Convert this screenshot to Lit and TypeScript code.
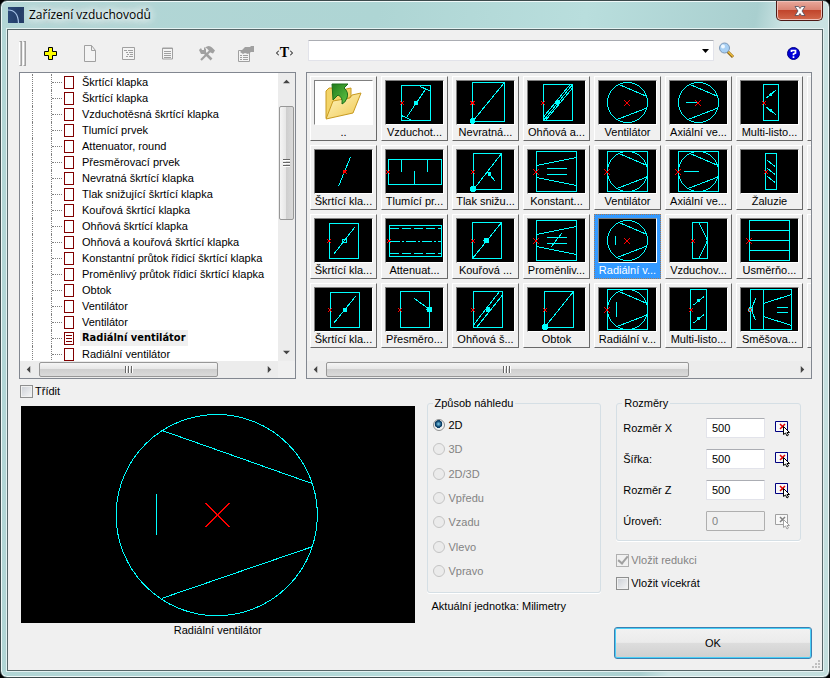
import { LitElement, html, svg, css } from "lit";
import { customElement, state } from "lit/decorators.js";
import { classMap } from "lit/directives/class-map.js";

const TREE = [
  "Škrtící klapka",
  "Škrtící klapka",
  "Vzduchotěsná škrtící klapka",
  "Tlumící prvek",
  "Attenuator, round",
  "Přesměrovací prvek",
  "Nevratná škrtící klapka",
  "Tlak snižující škrtící klapka",
  "Kouřová škrtící klapka",
  "Ohňová škrtící klapka",
  "Ohňová a kouřová škrtící klapka",
  "Konstantní průtok řídicí škrtící klapka",
  "Proměnlivý průtok řídicí škrtící klapka",
  "Obtok",
  "Ventilátor",
  "Ventilátor",
  "Radiální ventilátor",
  "Radiální ventilátor",
];

const line = (d: string) => svg`<path class="c" d=${d}></path>`;
const mark = (x: number, y: number, r = 2) =>
  svg`<path class="r" d=${`M${x - r} ${y - r}L${x + r} ${y + r}M${x + r} ${y - r}L${x - r} ${y + r}`}></path>`;
const dot = (x: number, y: number, r = 2.5) => svg`<circle class="d" cx=${x} cy=${y} r=${r}></circle>`;
const fan = svg`<circle class="c" cx="29.5" cy="22.5" r="20"></circle>
  <path class="c" d="M21 4.5L49 16.5M19 39.5L49 28"></path>`;
const square = line("M9.5 2.5H49.5V42.5H9.5Z");
const cone = line("M9.5 2.5H49.5V42.5H9.5ZM9.5 16.5L49.5 8.5M9.5 28.5L49.5 36.5M19.5 19.5H40M19.5 25.5H40");

const TILES: { label: string; art: unknown }[] = [
  { label: "..", art: null },
  { label: "Vzduchot...", art: [line("M16.5 5.5H45.5V40.5H16.5ZM21.5 37.5L41 8.5M35 6.5L45.5 11M16.5 35.5L26 40"), dot(31, 23), mark(17, 23)] },
  { label: "Nevratná...", art: [line("M16.5 2.5H48.5V41.5H16.5ZM48.5 2.5L16.5 41.5"), dot(16.5, 41, 3), mark(16.5, 23)] },
  { label: "Ohňová a...", art: [line("M16.5 4.5H45.5V40.5H16.5ZM43 4.5L16.5 37M45.5 4.5L16.5 40.5M45.5 8L18.5 40.5"), dot(30.5, 22.5), mark(16, 23)] },
  { label: "Ventilátor", art: [fan, mark(29, 23, 3)] },
  { label: "Axiální ve...", art: [fan, line("M17 22.5H29"), mark(29, 23, 3)] },
  { label: "Multi-listo...", art: [line("M23.5 4.5H38.5V40.5H23.5ZM26.5 18L36 10M26 27L36 34.5"), dot(31, 14.5, 1.5), dot(31, 30.5, 1.5), mark(24, 23)] },

  { label: "Škrtící kla...", art: [line("M36.5 8L24.5 37.5"), mark(31, 23), svg`<circle class="k" cx="30.5" cy="22.5" r="1.5"></circle>`] },
  { label: "Tlumící pr...", art: [line("M3.5 10.5H56.5V35.5H3.5ZM16.5 10.5V22.5M42.5 10.5V22.5M29.5 22V35.5"), mark(3, 23)] },
  { label: "Tlak snižu...", art: [line("M17.5 4.5H45.5V40.5H17.5ZM45.5 4.5L17.5 40.5M39.5 32.5L31.5 23"), dot(33.5, 25, 2), dot(17, 40, 3), mark(17, 23)] },
  { label: "Konstant...", art: [cone, mark(9, 23, 3)] },
  { label: "Ventilátor", art: [square, fan, mark(9, 23, 3)] },
  { label: "Axiální ve...", art: [square, fan, line("M15 22.5H30"), mark(9, 23, 3)] },
  { label: "Žaluzie", art: [line("M25.5 4.5H36.5V40.5H25.5ZM27.5 11.5L35 17.5M27.5 19.5L35 25.5M27.5 27.5L35 33.5"), mark(26, 23)] },

  { label: "Škrtící kla...", art: [line("M15.5 5.5H44.5V40.5H15.5ZM40.5 9.5L19.5 36.5M28.5 21.5H32.5V24.5H28.5Z"), mark(15, 23)] },
  { label: "Attenuat...", art: [line("M4.5 7.5H56.5V38.5H4.5Z"), svg`<path class="c" stroke-dasharray="9 3" d="M5 10.5H56M5 35.5H56"></path><path class="c" stroke-dasharray="10 2 2 2" d="M5 23.5H56"></path>`, mark(4, 23)] },
  { label: "Kouřová ...", art: [line("M16.5 4.5H45.5V40.5H16.5ZM45.5 4.5L16.5 40.5"), dot(30.5, 22.5, 3), mark(17, 23)] },
  { label: "Proměnliv...", art: [cone, line("M34.5 15.5L24 29"), mark(9, 23, 3)] },
  { label: "Radiální v...", art: [fan, line("M17.5 18V27"), mark(29, 23, 3)] },
  { label: "Vzduchov...", art: [line("M23.5 4.5H38.5V40.5H23.5ZM30 4.5L38.5 22.5L30 40.5"), mark(24, 23)] },
  { label: "Usměrňo...", art: [square, line("M9.5 12.5H49.5M9.5 22.5H49.5M9.5 32.5H49.5"), mark(9, 23, 3)] },

  { label: "Škrtící kla...", art: [line("M16.5 5.5H45.5V40.5H16.5ZM41.5 9.5L19.5 36.5"), dot(31, 23), mark(16, 23)] },
  { label: "Přesměro...", art: [line("M15.5 4.5H44.5V40.5H15.5ZM29.5 11.5L44.5 22.5"), dot(44.5, 22.5, 3), mark(15, 23)] },
  { label: "Ohňová š...", art: [line("M17.5 4.5H46.5V40.5H17.5ZM43.5 4.5L17.5 38M46.5 8L20.5 40.5"), dot(32, 22.5), mark(17, 23)] },
  { label: "Obtok", art: [line("M17.5 4.5H46.5V40.5H17.5ZM46.5 4.5L17.5 40.5"), dot(18, 40, 3), mark(18, 23)] },
  { label: "Radiální v...", art: [square, fan, line("M18.5 15V30"), mark(9, 23, 3)] },
  { label: "Multi-listo...", art: [line("M21.5 2.5H37.5V42.5H21.5ZM24.5 18L35 9.5M24.5 36L35 27.5"), dot(29.5, 13.5, 1.5), dot(29.5, 31.5, 1.5), mark(22, 23)] },
  { label: "Směšova...", art: [line("M10.5 2.5H51.5V42.5H10.5ZM23.5 2.5V42.5M23.5 16.5L51.5 7.5M23.5 29.5L51.5 38.5M36.5 20.5H48M36.5 25.5H48M15.5 11.5L11.5 22.5L15.5 33.5"), dot(10.5, 22.5), mark(10, 23)] },
];

const VIEWS = ["2D", "3D", "2D/3D", "Vpředu", "Vzadu", "Vlevo", "Vpravo"];

const SIZES = [
  { id: "x", label: "Rozměr X", value: "500", off: false },
  { id: "w", label: "Šířka:", value: "500", off: false },
  { id: "z", label: "Rozměr Z", value: "500", off: false },
  { id: "l", label: "Úroveň:", value: "0", off: true },
];

const folder = html`<svg class="art folder" viewBox="1 1 57 43">
  <defs>
    <linearGradient id="fo" x1="0" y1="0" x2="1" y2="1"><stop offset="0" stop-color="#fff6c4"></stop><stop offset="1" stop-color="#f0c850"></stop></linearGradient>
    <linearGradient id="gr" x1="0" y1="0" x2="1" y2="1"><stop offset="0" stop-color="#1f7a1c"></stop><stop offset="1" stop-color="#62c846"></stop></linearGradient>
  </defs>
  <path d="M12 38V11l3-3h6l2 3 14-3v8z" fill="#f3d468" stroke="#c89a20"></path>
  <path d="M12 39l7-18 17-3 2-3 9-2-8 20z" fill="url(#fo)" stroke="#c89a20"></path>
  <path d="M18 4h16l-4 4q5 4 3 10-2 5-5 6 1-7-4-9l-5 5z" fill="url(#gr)" stroke="#1c6c1a"></path>
</svg>`;

const TOOLS = [
  { name: "Přidat", art: svg`<path d="M7.500 3.500h4v4h4v4h-4v4h-4v-4h-4v-4h4z" fill="#ffff00" stroke="#000"></path>` },
  { name: "Nový", art: svg`<path d="M4.500 1.500h7l4 5v11h-11zM11.500 1.500v5h4" fill="#f4f4f4" stroke="#a0a0a0"></path>` },
  { name: "Seznam", art: svg`<path d="M3.500 3.500h12v12h-12z" fill="#f4f4f4" stroke="#a0a0a0"></path><path d="M5 6.500h3M9 6.500h5M7 8.500h2M10 8.500h4M8 10.500h2M11 10.500h3M7 12.500h2M10 12.500h4" stroke="#a0a0a0"></path>` },
  { name: "Text", art: svg`<path d="M4.500 4h10v11h-10z" fill="#f4f4f4" stroke="#a0a0a0"></path><path d="M4 4.500h11M6 7.500h7M6 9.500h7M6 11.500h7M6 13.500h7" stroke="#a0a0a0"></path>` },
  { name: "Nástroje", art: svg`<path d="M4 16L13 7" stroke="#a0a0a0" stroke-width="2.200"></path><path d="M7 8L14.500 15.500" stroke="#a0a0a0" stroke-width="2.600"></path><path d="M8 3.500q4-3 7 0l3 3-2 3-2.500-1-3.500-4z" fill="#a0a0a0"></path><path d="M2 6l2-2 1 2h2L7 3l2 2v3L7 10H4z" fill="#a0a0a0"></path>` },
  { name: "Vlastnosti", art: svg`<path d="M2.500 6.500h11v11h-11z" fill="#f4f4f4" stroke="#a0a0a0"></path><path d="M4 11.500h2M7 11.500h5M4 13.500h2M7 13.500h5M4 15.500h2M7 15.500h5" stroke="#a0a0a0"></path><path d="M4 8l5-5h5l1-1h3v6h-3l-3 2-3-1-2 1z" fill="#a0a0a0"></path>` },
];

const picker = (off: boolean) => {
  const a = off ? "#a0a0a0" : "#000080";
  const b = off ? "#808080" : "#e00000";
  const c = off ? "#a0a0a0" : "#000";
  return html`<svg width="16" height="17" viewBox="0 0 16 17">
    <path d="M.5 1.500h12v10H.5z" fill="#f8f8f8" stroke=${a}></path>
    <path d="M5 4l5 5M10 4l-5 5" stroke=${b} stroke-width="1.500"></path>
    <path d="M8.500 6.500v8l2-1.500 1.500 3 1.500-1-1.500-2.500h2.500z" fill="#fff" stroke=${c}></path>
  </svg>`;
};

const arrow = (dir: string) => {
  const d = { left: "M6 0v8L2 4z", right: "M2 0v8l4-4z", up: "M0 6h8L4 2z", down: "M0 2h8L4 6z" }[dir];
  return html`<svg width="7" height="7" viewBox="0 0 8 8"><path d=${d} fill="#444"></path></svg>`;
};

const bar = (kind: string) => html`<div class="bar ${kind}" aria-hidden="true">
  <span class="arrow">${arrow(kind === "v" ? "up" : "left")}</span>
  <span class="lead"></span>
  <span class="thumb"><span class="ridges"></span></span>
  <span class="rest"></span>
  <span class="arrow">${arrow(kind === "v" ? "down" : "right")}</span>
</div>`;

@customElement("app-root")
export class AppRoot extends LitElement {
  @state() private node = 16;
  @state() private tile = 18;

  static styles = css`
    :host {
      display: block;
      background: #000;
      color: #000;
      font: 11px/14px "Liberation Sans", "Noto Sans", sans-serif;
    }
    * { box-sizing: border-box; }
    button, input, select { font: inherit; color: inherit; margin: 0; }
    svg { display: block; }
    .window {
      min-height: 100vh;
      display: flex;
      flex-direction: column;
      border: 1px solid #3c4a4c;
      border-radius: 7px;
      padding: 0 6px 6px;
      background: linear-gradient(100deg, #b3d6d6 0, #aed5d4 40%, #b9dedd 62%, #a9cfcf 80%, #cbe3e3 83%, #c2dedd 100%);
      box-shadow: inset 0 0 0 1px #eef8f8;
    }
    .title {
      height: 28px;
      display: flex;
      align-items: center;
      gap: 5px;
      padding-left: 1px;
    }
    .title h1 {
      margin: 0;
      flex: 1;
      font: 12px/18px "Open Sans", "Noto Sans", sans-serif;
      text-shadow: 0 0 6px #fff, 0 0 10px #fff, 0 0 14px #fff, 0 0 18px #fff;
    }
    .close {
      align-self: flex-start;
      width: 47px;
      height: 20px;
      padding: 0;
      display: grid;
      place-items: center;
      border: 1px solid #4d1a16;
      border-top: 0;
      border-radius: 0 0 5px 5px;
      background: linear-gradient(#e9a99c 0, #d98372 48%, #c1452c 50%, #d2694c 100%);
      box-shadow: inset 0 0 0 1px #f0c0b8;
    }
    .body {
      flex: 1;
      border: 1px solid #566668;
      background: #f0f0f0;
      box-shadow: 0 0 0 1px #e4f2f2;
      padding: 0 10px 4px 11px;
      display: flex;
      flex-direction: column;
      position: relative;
    }
    .toolbar { display: flex; align-items: center; height: 42px; padding: 4px 0 0; }
    .grip { width: 12px; height: 25px; display: flex; gap: 1px; flex: none; }
    .grip i { width: 3px; border: 1px solid #a0a0a0; border-left-color: #fff; background: #c8c8c8; }
    .tool { width: 39px; height: 24px; border: 0; padding: 0; background: none; display: grid; place-items: center; flex: none; }
    .tag { display: flex; align-items: center; justify-content: center; gap: 1px; font: bold 14px/16px "Liberation Serif", serif; }
    .combo { flex: 1; position: relative; align-self: flex-start; margin: 6px 0 0 4px; }
    .combo select {
      width: 100%; height: 21px; display: block; appearance: none; border: 1px solid #e2e3ea;
      border-top-color: #abadb3; background: #fff; border-radius: 1px; padding: 0 20px 0 4px;
    }
    .combo svg { position: absolute; right: 5px; top: 9px; pointer-events: none; }
    .find { border: 0; padding: 0; background: none; margin: 0 0 6px 4px; }
    .help { border: 0; padding: 0; background: none; margin: 0 12px 0 52px; }

    .panes { display: grid; grid-template-columns: 277fr 506fr; gap: 10px; height: 307px; }
    .pane { border: 1px solid #828790; min-width: 0; overflow: hidden; display: flex; flex-direction: column; }
    .tree { background: #fff; }
    .rows { flex: 1; min-height: 0; display: flex; }
    .tree ul {
      flex: 1; min-width: 0; margin: 0; padding: 1px 0 0 12px; list-style: none; overflow: hidden;
    }
    .tree li {
      height: 16px; display: flex; align-items: center; border-left: 1px dotted #808080;
    }
    .tree li::before { content: ""; width: 18px; height: 16px; border-right: 1px dotted #808080; flex: none; }
    .stem { width: 10px; border-top: 1px dotted #808080; margin: 0 2px 0 0; }
    .page { width: 10px; height: 13px; border: 1px solid #800000; background: #fff; display: grid; align-content: space-evenly; padding: 0 1px; }
    .page i { height: 1px; background: #800000; }
    .node { border: 0; background: none; padding: 0 2px; margin-left: 6px; height: 16px; white-space: nowrap; line-height: 16px; }
    .node.on { font-family: "DejaVu Sans Condensed", sans-serif; font-weight: bold; background: #f0f0f0; }

    .bar { display: flex; align-items: center; background: #ececec; flex: none; }
    .bar.v { width: 17px; flex-direction: column; }
    .bar.h, .bar.w { height: 17px; }
    .arrow { width: 17px; height: 17px; display: grid; place-items: center; flex: none; }
    .thumb {
      display: grid; place-items: center; border: 1px solid #979797; border-radius: 2px;
      background: linear-gradient(#f5f5f5 0, #e6e6e6 48%, #cfcfcf 50%, #dadada 100%);
    }
    .h .thumb { width: 179px; height: 15px; }
    .w .thumb { flex: 363; height: 15px; }
    .w .rest { flex: 106; }
    .h .rest, .v .rest { flex: 1; }
    .v .thumb { width: 15px; height: 114px; background: linear-gradient(90deg, #f5f5f5 0, #e6e6e6 48%, #cfcfcf 50%, #dadada 100%); }
    .h .lead, .w .lead { width: 2px; }
    .v .lead { height: 16px; }
    .ridges { width: 8px; height: 7px; background: repeating-linear-gradient(90deg, #666 0 1px, #fff 1px 2px, transparent 2px 3px); }
    .v .ridges { width: 7px; height: 8px; background: repeating-linear-gradient(#666 0 1px, #fff 1px 2px, transparent 2px 3px); }
    .foot { display: flex; padding-right: 17px; background: #f0f0f0; }
    .foot .bar { flex: 1; }

    .gallery {
      flex: 1; min-height: 0; overflow: hidden; display: grid; padding: 3px;
      grid-template-columns: repeat(8, 67px); grid-auto-rows: 65px; gap: 4px;
    }
    .tile {
      border: 1px solid #fff; border-right-color: #696969; border-bottom-color: #696969;
      background: #f0f0f0; padding: 3px 3px 0; display: flex; flex-direction: column; align-items: center;
      overflow: hidden; white-space: nowrap; line-height: 14px;
    }
    .tile.on { background: #3399ff; color: #fff; border: 1px dotted #a87850; }
    .frame {
      width: 59px; height: 45px; flex: none; background: #000; display: block;
      border: 1px solid #808080; border-right-color: #fff; border-bottom-color: #fff;
    }
    .frame.light { background: #fff; }
    .art { width: 57px; height: 43px; shape-rendering: crispEdges; }
    .folder { shape-rendering: auto; }
    .c { fill: none; stroke: #00ffff; }
    .r { fill: none; stroke: #ff0000; stroke-width: 1.3; }
    .d { fill: #00ffff; }
    .k { fill: #ff0000; }

    .sort { display: flex; align-items: center; gap: 2px; height: 22px; margin: 1px 0 3px 1px; }
    .lower { display: grid; grid-template-columns: 393fr 385fr; gap: 12px; padding-left: 2px; }
    figure { margin: 1px 0 0; text-align: center; }
    .preview { width: 100%; height: auto; background: #000; shape-rendering: crispEdges; }
    .side { display: grid; grid-template-columns: 175fr 185fr; gap: 15px; align-items: start; margin-top: -9px; padding-right: 11px; }
    fieldset { margin: 0; border: 1px solid #d5dfe5; border-radius: 3px; padding: 0 5px; min-width: 0; box-shadow: 0 1px 0 #fff; }
    legend { padding: 0 2px; line-height: 14px; height: 14px; }
    .views { height: 182px; display: flex; flex-direction: column; justify-content: space-between; padding: 8px 0 14px; }
    .opt { display: flex; align-items: center; gap: 4px; height: 14px; }
    .opt input[type="radio"] {
      appearance: none; width: 12px; height: 12px; border: 1px solid #8e8f8f; border-radius: 50%;
      background: radial-gradient(circle, #d8d8d8 0, #fff 100%); flex: none;
    }
    .opt input[type="radio"]:checked {
      background: radial-gradient(circle at 45% 40%, #7fd0f0 0, #0b3f68 36%, #0b3f68 45%, #eee 50%, #fff 100%);
    }
    .off { color: #838383; }
    .opt.off input[type="radio"] { border-color: #c4c4c4; background: #ebebeb; }
    .check { display: flex; align-items: center; gap: 2px; height: 14px; }
    input[type="checkbox"] {
      appearance: none; width: 13px; height: 13px; border: 1px solid #8e8f8f; flex: none;
      background: linear-gradient(135deg, #cbcfd5, #f6f6f6); background-clip: content-box; padding: 1px; display: grid;
    }
    .check.off input { border-color: #b0b0b0; background: #f0f0f0; }
    .check.off input::after {
      content: ""; width: 4px; height: 8px; border: solid #a0a0a0; border-width: 0 2px 2px 0;
      transform: rotate(40deg); place-self: center; margin-top: -2px;
    }
    .sizes { display: grid; gap: 11px; padding: 8px 4px 9px 1px; }
    .size { display: grid; grid-template-columns: 1fr 59px 18px; align-items: center; column-gap: 8px; }
    .size input {
      width: 100%; height: 20px; border: 1px solid #e2e3ea; border-top-color: #abadb3; background: #fff;
      padding: 0 5px; border-radius: 1px;
    }
    .size input:disabled { background: #f0f0f0; border-color: #afafaf; color: #838383; }
    .pick { border: 0; background: none; padding: 0; justify-self: end; }
    .unit { margin: 6px 0 0 5px; white-space: nowrap; }
    .checks { display: grid; gap: 9px; margin-top: 12px; }
    .actions { display: flex; justify-content: flex-end; margin-top: -10px; }
    .ok {
      width: 198px; height: 32px; border: 1px solid #3c7fb1; border-radius: 3px; padding: 0;
      background: linear-gradient(#f2f2f2 0, #ebebeb 48%, #dddddd 50%, #cfcfcf 100%);
      box-shadow: inset 0 0 0 1px #48d0f8;
    }
    .resize { position: absolute; right: 1px; bottom: 1px; }
  `;

  render() {
    return html`<div class="window">
      <header class="title">
        <svg width="16" height="16" viewBox="0 0 16 16">
          <defs><linearGradient id="ti" x1="0" y1="0" x2="1" y2="0"><stop offset="0" stop-color="#2c4a78"></stop><stop offset="1" stop-color="#1c3560"></stop></linearGradient></defs>
          <rect width="16" height="16" fill="url(#ti)"></rect>
          <path d="M0 3Q10 3 10.500 16" fill="none" stroke="#a8c4e8" stroke-width="1.200"></path>
        </svg>
        <h1>Zařízení vzduchovodů</h1>
        <button class="close" aria-label="Zavřít">
          <svg width="12" height="10" viewBox="0 0 12 10"><path d="M1 .5h3.500L6 2.500 7.500 .5H11L8 5l3 4.500H7.500L6 7.500l-1.500 2H1L4 5z" fill="#fff" stroke="#4c4c5c" stroke-width=".8"></path></svg>
        </button>
      </header>
      <main class="body">
        <div class="toolbar">
          <span class="grip"><i></i><i></i></span>
          ${TOOLS.map(
            (t) => html`<button class="tool" aria-label=${t.name}><svg width="19" height="19" viewBox="0 0 19 19">${t.art}</svg></button>`,
          )}
          <button class="tool tag">
            <svg width="3" height="6" viewBox="0 0 3 6"><path d="M3 .5L.5 3 3 5.500" fill="none" stroke="#000"></path></svg>T<svg width="3" height="6" viewBox="0 0 3 6"><path d="M0 .5L2.500 3 0 5.500" fill="none" stroke="#000"></path></svg>
          </button>
          <div class="combo">
            <select aria-label="Hledat"><option></option></select>
            <svg width="7" height="4" viewBox="0 0 7 4"><path d="M0 0h7L3.500 4z" fill="#000"></path></svg>
          </div>
          <button class="find" aria-label="Najít">
            <svg width="17" height="17" viewBox="0 0 17 17">
              <path d="M9.500 9.500L15 15" stroke="#8a6010" stroke-width="3"></path>
              <path d="M10 9.500L15 14.500" stroke="#f0c040" stroke-width="1.500"></path>
              <circle cx="6.500" cy="6" r="5" fill="#a8d0f4" stroke="#7c98b8"></circle>
              <circle cx="5" cy="4.500" r="2" fill="#eef8ff"></circle>
            </svg>
          </button>
          <button class="help" aria-label="Nápověda">
            <svg width="13" height="13" viewBox="0 0 13 13"><circle cx="6.500" cy="6.500" r="6" fill="#0000d8" stroke="#000080"></circle><path d="M4.500 5V3.500h4V6L6.500 7v1.200M6.500 9.200V11" fill="none" stroke="#fff" stroke-width="1.700"></path></svg>
          </button>
        </div>

        <div class="panes">
          <section class="pane tree">
            <div class="rows">
              <ul>
                ${TREE.map(
                  (name, i) => html`<li>
                    <span class="stem"></span>
                    <span class="page">${i === this.node ? html`<i></i><i></i><i></i>` : null}</span>
                    <button class="node ${classMap({ on: i === this.node })}" @click=${() => (this.node = i)}>${name}</button>
                  </li>`,
                )}
              </ul>
              ${bar("v")}
            </div>
            <div class="foot">${bar("h")}</div>
          </section>
          <section class="pane">
            <div class="gallery">
              ${TILES.map(
                (t, i) => html`<button class="tile ${classMap({ on: i === this.tile })}" @click=${() => (this.tile = i)}>
                    <span class="frame ${classMap({ light: !t.art })}">
                      ${t.art ? html`<svg class="art" viewBox="1 1 57 43">${t.art}</svg>` : folder}
                    </span>
                    <span>${t.label}</span>
                  </button>
                  ${i % 7 === 6 ? html`<span class="tile"></span>` : null}`,
              )}
            </div>
            ${bar("w")}
          </section>
        </div>

        <label class="sort"><input type="checkbox" />Třídit</label>

        <div class="lower">
          <figure>
            <svg class="preview" viewBox="0 0 393 217">
              <circle class="c" cx="195.500" cy="109" r="100.500"></circle>
              <path class="c" d="M141 24.500L291 77.500M141 192L291 140.500M135.500 88V129"></path>
              <path class="r" d="M184 97L208 121M208 97L184 121"></path>
            </svg>
            <figcaption>Radiální ventilátor</figcaption>
          </figure>
          <div class="side">
            <div>
              <fieldset>
                <legend>Způsob náhledu</legend>
                <div class="views">
                  ${VIEWS.map(
                    (v, i) => html`<label class="opt ${classMap({ off: i > 0 })}">
                      <input type="radio" name="view" ?checked=${i === 0} ?disabled=${i > 0} />${v}
                    </label>`,
                  )}
                </div>
              </fieldset>
              <p class="unit">Aktuální jednotka: Milimetry</p>
            </div>
            <div>
              <fieldset>
                <legend>Rozměry</legend>
                <div class="sizes">
                  ${SIZES.map(
                    (s) => html`<div class="size">
                      <label for=${s.id}>${s.label}</label>
                      <input id=${s.id} type="text" .value=${s.value} ?disabled=${s.off} />
                      <button class="pick" aria-label="Vybrat" ?disabled=${s.off}>${picker(s.off)}</button>
                    </div>`,
                  )}
                </div>
              </fieldset>
              <div class="checks">
                <label class="check off"><input type="checkbox" checked disabled />Vložit redukci</label>
                <label class="check"><input type="checkbox" />Vložit vícekrát</label>
              </div>
            </div>
          </div>
        </div>
        <div class="actions"><button class="ok">OK</button></div>
        <svg class="resize" width="9" height="9" viewBox="0 0 9 9"><path d="M6 0h2v2H6zM3 3h2v2H3zM6 3h2v2H6zM0 6h2v2H0zM3 6h2v2H3zM6 6h2v2H6z" fill="#c0c0c0"></path></svg>
      </main>
    </div>`;
  }
}
